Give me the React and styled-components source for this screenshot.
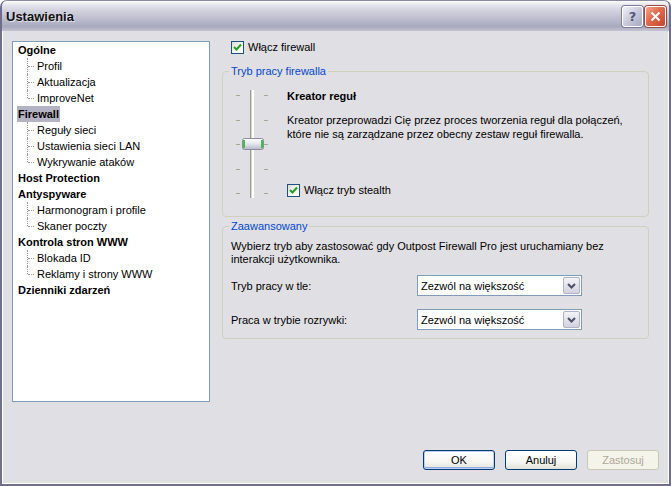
import React from 'react';
import styled, { createGlobalStyle, css } from 'styled-components';

const GlobalStyle = createGlobalStyle`
  html, body {
    margin: 0;
    padding: 0;
    background: #ffffff;
  }
  body {
    font-family: "Liberation Sans", Arial, sans-serif;
    font-size: 11px;
    color: #000;
  }
`;

const Window = styled.div`
  width: 671px;
  height: 486px;
  box-sizing: border-box;
  display: flex;
  flex-direction: column;
  background: #e0dfe3;
  border: 2px solid #6f6e8c;
  border-top: none;
  border-radius: 7px 7px 0 0;
  overflow: hidden;
`;

const TitleBar = styled.div`
  height: 30px;
  flex-shrink: 0;
  display: flex;
  align-items: center;
  padding: 0 4px 0 5px;
  margin: 0 -2px;
  border-radius: 7px 7px 0 0;
  border: 1px solid #8b8aa6;
  border-bottom: none;
  background: linear-gradient(
    #ffffff 0%,
    #e6e6ee 12%,
    #cfcfdc 35%,
    #b9b9cb 65%,
    #a9a9bf 85%,
    #c3c3d2 100%
  );
`;

const Title = styled.div`
  flex: 1;
  font-family: "Liberation Sans", Arial, sans-serif;
  font-weight: bold;
  font-size: 13px;
  color: #111;
  text-shadow: 1px 1px 0 rgba(255, 255, 255, 0.6);
`;

const CaptionButton = styled.div`
  width: 21px;
  height: 21px;
  box-sizing: border-box;
  margin-left: 2px;
  border: 1px solid #ffffff;
  border-radius: 3px;
  display: flex;
  align-items: center;
  justify-content: center;
  ${p => p.$close ? css`
    background: linear-gradient(135deg, #f1a48c 0%, #e06a4c 45%, #c7442b 100%);
    box-shadow: 0 0 0 1px #9c4a3c;
  ` : css`
    background: linear-gradient(135deg, #f2f2f8 0%, #c9c9da 50%, #a8a8c0 100%);
    box-shadow: 0 0 0 1px #7c7c98;
  `}
`;

const HelpGlyph = styled.span`
  font-family: "DejaVu Sans", sans-serif;
  font-weight: bold;
  font-size: 13px;
  color: #55557a;
`;

const Body = styled.div`
  flex: 1;
  display: flex;
  flex-direction: column;
  padding: 10px 18px 14px 10px;
  box-shadow: inset 1px 0 0 #ffffff, inset -1px 0 0 #ffffff, inset 0 -1px 0 #ffffff;
`;

const MainRow = styled.div`
  display: flex;
  gap: 12px;
  align-items: flex-start;
`;

const Tree = styled.div`
  width: 198px;
  height: 361px;
  box-sizing: border-box;
  background: #ffffff;
  border: 1px solid #7f9db9;
`;

const TreeRow = styled.div`
  position: relative;
  height: 16px;
  line-height: 16px;
  white-space: nowrap;
  padding-left: ${p => (p.$child ? '23px' : '4px')};
  font-weight: ${p => (p.$child ? 'normal' : 'bold')};

  ${p => p.$child && css`
    &::before {
      content: '';
      position: absolute;
      left: 14px;
      top: 0;
      height: ${p.$last ? '8px' : '16px'};
      border-left: 1px dotted #9a9a9a;
    }
    &::after {
      content: '';
      position: absolute;
      left: 15px;
      top: 8px;
      width: 6px;
      border-top: 1px dotted #9a9a9a;
    }
  `}
`;

const TreeLabel = styled.span`
  padding: 0 1px;
  display: inline-block;
  height: 16px;
  background: ${p => (p.$selected ? '#b4b3c3' : 'transparent')};
`;

const RightPane = styled.div`
  width: 427px;
  display: flex;
  flex-direction: column;
`;

const CheckRow = styled.label`
  display: flex;
  align-items: center;
  gap: 4px;
  height: 13px;
  line-height: 13px;
  padding-left: ${p => p.$indent || 0}px;
  margin-top: ${p => (p.$bottom ? 'auto' : '0')};
  margin-bottom: ${p => (p.$bottom ? '4px' : '0')};
`;

const Box = styled.span`
  width: 13px;
  height: 13px;
  box-sizing: border-box;
  border: 1px solid #1c5180;
  background: linear-gradient(135deg, #dcdcd7 0%, #f3f3ef 50%, #ffffff 100%);
  display: inline-flex;
  align-items: center;
  justify-content: center;
`;

const Group = styled.fieldset`
  margin: 0;
  padding: 0;
  min-width: 0;
  border: 1px solid #d0d0bf;
  border-radius: 4px;
  margin-top: ${p => p.$top || 0}px;
`;

const Legend = styled.legend`
  margin-left: 6px;
  padding: 0 2px;
  color: #0046d5;
  line-height: 13px;
`;

const ModeContent = styled.div`
  display: flex;
  padding: 9px 12px 15px 12px;
  gap: 18px;
`;

const ModeText = styled.div`
  display: flex;
  flex-direction: column;
  padding-top: 2px;
`;

const ModeTitle = styled.div`
  font-weight: bold;
  line-height: 14px;
`;

const ModeDesc = styled.div`
  margin-top: 10px;
  line-height: 14px;
`;

const AdvContent = styled.div`
  padding: 7px 8px 8px 8px;
`;

const Paragraph = styled.div`
  line-height: 13px;
`;

const FieldGrid = styled.div`
  display: grid;
  grid-template-columns: 186px 165px;
  row-gap: 13px;
  margin-top: 9px;
  align-items: center;
`;

const Combo = styled.div`
  height: 21px;
  box-sizing: border-box;
  border: 1px solid #7f9db9;
  background: #ffffff;
  display: flex;
  align-items: center;
  padding: 1px;
`;

const ComboText = styled.div`
  flex: 1;
  padding-left: 2px;
`;

const ComboArrow = styled.div`
  width: 17px;
  height: 17px;
  box-sizing: border-box;
  border: 1px solid #b3b2c4;
  border-radius: 2px;
  background: linear-gradient(#f3f3f7, #d2d2de);
  display: flex;
  align-items: center;
  justify-content: center;
`;

const Footer = styled.div`
  margin-top: auto;
  margin-right: -8px;
  display: flex;
  justify-content: flex-end;
  gap: 10px;
`;

const Button = styled.div`
  width: 72px;
  height: 20px;
  box-sizing: border-box;
  border-radius: 3px;
  display: flex;
  align-items: center;
  justify-content: center;
  border: 1px solid ${p => (p.$disabled ? '#c9c7ba' : '#003c74')};
  color: ${p => (p.$disabled ? '#aca899' : '#000')};
  background: ${p => (p.$disabled ? '#f5f4ea' : 'linear-gradient(#ffffff 0%, #f6f6f3 60%, #e3e2da 100%)')};
  box-shadow: ${p => (p.$default ? 'inset 0 0 0 1px #bcd0f4, inset 0 -1px 0 1px #89ade4' : 'none')};
`;

const tree = [
  { label: 'Ogólne' },
  { label: 'Profil', child: true },
  { label: 'Aktualizacja', child: true },
  { label: 'ImproveNet', child: true, last: true },
  { label: 'Firewall', selected: true },
  { label: 'Reguły sieci', child: true },
  { label: 'Ustawienia sieci LAN', child: true },
  { label: 'Wykrywanie ataków', child: true, last: true },
  { label: 'Host Protection' },
  { label: 'Antyspyware' },
  { label: 'Harmonogram i profile', child: true },
  { label: 'Skaner poczty', child: true, last: true },
  { label: 'Kontrola stron WWW' },
  { label: 'Blokada ID', child: true },
  { label: 'Reklamy i strony WWW', child: true, last: true },
  { label: 'Dzienniki zdarzeń' },
];

const CheckMark = () => (
  <svg width="9" height="9" viewBox="0 0 9 9">
    <path d="M1 4 L3.5 6.5 L8 1.5" fill="none" stroke="#21a121" strokeWidth="2" />
  </svg>
);

const Checkbox = ({ children, indent, bottom }) => (
  <CheckRow $indent={indent} $bottom={bottom}>
    <Box><CheckMark /></Box>
    {children}
  </CheckRow>
);

const Slider = () => {
  const ticks = [8, 33, 57, 82, 106];
  return (
    <svg width="34" height="114" viewBox="0 0 34 114">
      {ticks.map(y => (
        <g key={y}>
          <rect x="1" y={y} width="4" height="1" fill="#a7a797" />
          <rect x="29" y={y} width="4" height="1" fill="#a7a797" />
        </g>
      ))}
      <rect x="15" y="3" width="4" height="108" fill="#ffffff" />
      <rect x="15" y="3" width="1" height="108" fill="#9c9b94" />
      <rect x="16" y="3" width="1" height="108" fill="#d7d6ce" />
      <defs>
        <linearGradient id="thumb" x1="0" y1="0" x2="0" y2="1">
          <stop offset="0" stopColor="#ffffff" />
          <stop offset="0.5" stopColor="#e4e4ec" />
          <stop offset="1" stopColor="#b8b8c8" />
        </linearGradient>
      </defs>
      <rect x="7.5" y="51.5" width="21" height="11" rx="2" fill="url(#thumb)" stroke="#8a8aa0" />
      <rect x="8" y="53" width="2" height="8" fill="#3cc23c" />
      <rect x="26" y="53" width="2" height="8" fill="#3cc23c" />
    </svg>
  );
};

const Chevron = () => (
  <svg width="9" height="6" viewBox="0 0 9 6">
    <path d="M1 1 L4.5 4.5 L8 1" fill="none" stroke="#4d4d66" strokeWidth="2" />
  </svg>
);

const Select = ({ value }) => (
  <Combo>
    <ComboText>{value}</ComboText>
    <ComboArrow><Chevron /></ComboArrow>
  </Combo>
);

export default function App() {
  return (
    <>
      <GlobalStyle />
      <Window>
        <TitleBar>
          <Title>Ustawienia</Title>
          <CaptionButton><HelpGlyph>?</HelpGlyph></CaptionButton>
          <CaptionButton $close>
            <svg width="11" height="11" viewBox="0 0 11 11">
              <path d="M1.5 1.5 L9.5 9.5 M9.5 1.5 L1.5 9.5" stroke="#ffffff" strokeWidth="2" />
            </svg>
          </CaptionButton>
        </TitleBar>
        <Body>
          <MainRow>
            <Tree>
              {tree.map(item => (
                <TreeRow key={item.label} $child={item.child} $last={item.last}>
                  <TreeLabel $selected={item.selected}>{item.label}</TreeLabel>
                </TreeRow>
              ))}
            </Tree>
            <RightPane>
              <Checkbox indent={9}>Włącz firewall</Checkbox>
              <Group $top={11}>
                <Legend>Tryb pracy firewalla</Legend>
                <ModeContent>
                  <Slider />
                  <ModeText>
                    <ModeTitle>Kreator reguł</ModeTitle>
                    <ModeDesc>
                      Kreator przeprowadzi Cię przez proces tworzenia reguł dla połączeń,<br />
                      które nie są zarządzane przez obecny zestaw reguł firewalla.
                    </ModeDesc>
                    <Checkbox bottom>Włącz tryb stealth</Checkbox>
                  </ModeText>
                </ModeContent>
              </Group>
              <Group $top={3}>
                <Legend>Zaawansowany</Legend>
                <AdvContent>
                  <Paragraph>
                    Wybierz tryb aby zastosować gdy Outpost Firewall Pro jest uruchamiany bez<br />
                    interakcji użytkownika.
                  </Paragraph>
                  <FieldGrid>
                    <span>Tryb pracy w tle:</span>
                    <Select value="Zezwól na większość" />
                    <span>Praca w trybie rozrywki:</span>
                    <Select value="Zezwól na większość" />
                  </FieldGrid>
                </AdvContent>
              </Group>
            </RightPane>
          </MainRow>
          <Footer>
            <Button $default>OK</Button>
            <Button>Anuluj</Button>
            <Button $disabled>Zastosuj</Button>
          </Footer>
        </Body>
      </Window>
    </>
  );
}
